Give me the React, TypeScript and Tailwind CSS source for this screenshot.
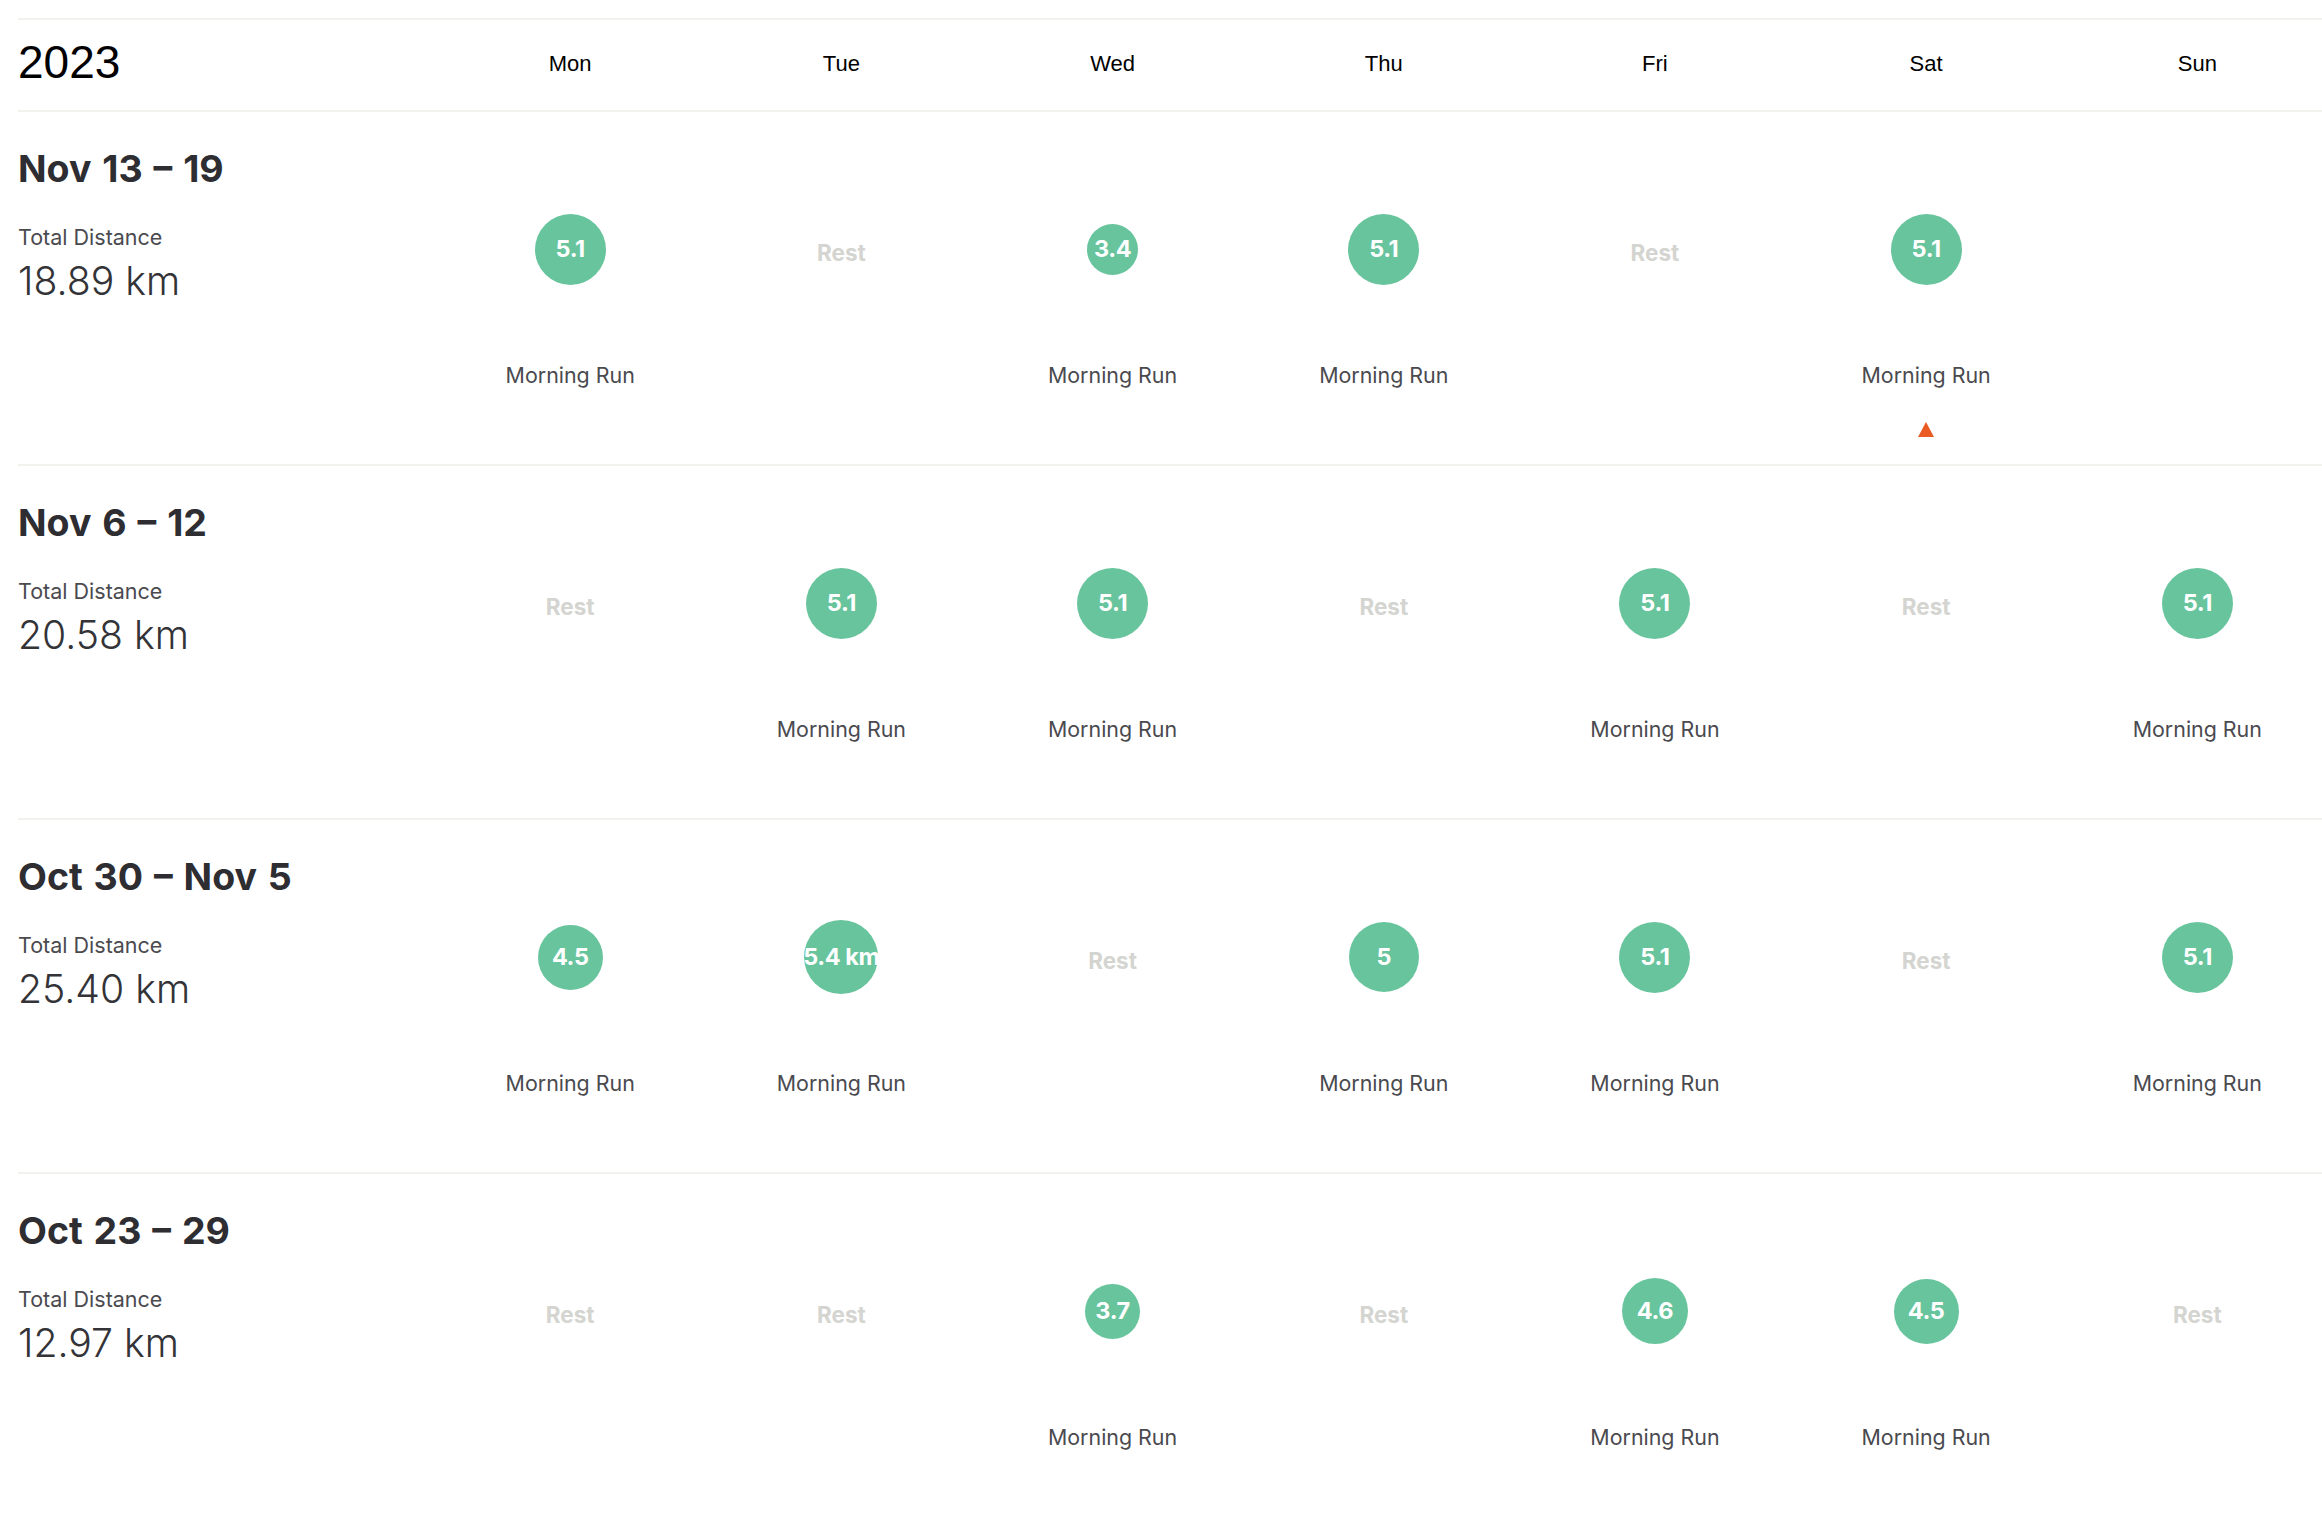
const DAYS = ["Mon", "Tue", "Wed", "Thu", "Fri", "Sat", "Sun"];

type Cell = { label: string; size: number; marker?: boolean } | null;

const WEEKS: { range: string; total: string; cells: (Cell | undefined)[] }[] = [
  {
    range: "Nov 13 – 19",
    total: "18.89 km",
    cells: [
      { label: "5.1", size: 71 },
      null,
      { label: "3.4", size: 51 },
      { label: "5.1", size: 71 },
      null,
      { label: "5.1", size: 71, marker: true },
      undefined,
    ],
  },
  {
    range: "Nov 6 – 12",
    total: "20.58 km",
    cells: [
      null,
      { label: "5.1", size: 71 },
      { label: "5.1", size: 71 },
      null,
      { label: "5.1", size: 71 },
      null,
      { label: "5.1", size: 71 },
    ],
  },
  {
    range: "Oct 30 – Nov 5",
    total: "25.40 km",
    cells: [
      { label: "4.5", size: 65 },
      { label: "5.4 km", size: 74 },
      null,
      { label: "5", size: 70 },
      { label: "5.1", size: 71 },
      null,
      { label: "5.1", size: 71 },
    ],
  },
  {
    range: "Oct 23 – 29",
    total: "12.97 km",
    cells: [
      null,
      null,
      { label: "3.7", size: 55 },
      null,
      { label: "4.6", size: 66 },
      { label: "4.5", size: 65 },
      null,
    ],
  },
];

function DayCell({ cell }: { cell: Cell | undefined }) {
  if (cell === undefined) return <div />;
  if (cell === null) {
    return (
      <div className="mt-[86px] flex h-[102px] items-center justify-center pt-[8px] text-[22.5px] font-bold text-[#d4d4d0]">
        Rest
      </div>
    );
  }
  return (
    <div className="flex flex-col items-center">
      <div className="mt-[86px] flex h-[102px] items-center justify-center">
        <div
          className="flex items-center justify-center rounded-full bg-[#68c49d] text-[23.5px] font-bold tracking-[-0.4px] whitespace-nowrap text-white"
          style={{ width: cell.size, height: cell.size }}
        >
          {cell.label}
        </div>
      </div>
      <div className="mt-[59px] text-[21.4px] leading-[32px] text-[#4a4a4f]">Morning Run</div>
      {cell.marker && (
        <svg className="mt-[31px]" width="16" height="15" viewBox="0 0 16 15">
          <polygon points="8,0 16,15 0,15" fill="#ea5b24" />
        </svg>
      )}
    </div>
  );
}

export default function App() {
  return (
    <div className="h-screen overflow-hidden bg-white pl-[18px] pt-[18px] font-['Inter',sans-serif] antialiased">
      <div className="w-[2316px]">
        <div className="grid h-[92px] grid-cols-[416.6px_repeat(7,271.2px)] items-center border-t-2 border-[#f2f2ee] font-['Liberation_Sans',sans-serif] text-black">
          <div className="pb-[7px] text-[46px] leading-none">2023</div>
          {DAYS.map((d) => (
            <div key={d} className="pb-[4px] text-center text-[22px]">
              {d}
            </div>
          ))}
        </div>
        {WEEKS.map((w) => (
          <div
            key={w.range}
            className="grid h-[354px] grid-cols-[416.6px_repeat(7,271.2px)] border-t-2 border-[#f2f2ee]"
          >
            <div>
              <div className="mt-[33px] text-[37.5px] leading-[48px] font-bold [word-spacing:2px] whitespace-pre text-[#2d2d32]">
                {w.range}
              </div>
              <div className="mt-[28px] text-[21.5px] leading-[32px] text-[#4a4a4f]">Total Distance</div>
              <div className="mt-[2px] text-[39.2px] leading-[52px] font-light text-[#333338]">{w.total}</div>
            </div>
            {w.cells.map((c, i) => (
              <DayCell key={i} cell={c} />
            ))}
          </div>
        ))}
      </div>
    </div>
  );
}
